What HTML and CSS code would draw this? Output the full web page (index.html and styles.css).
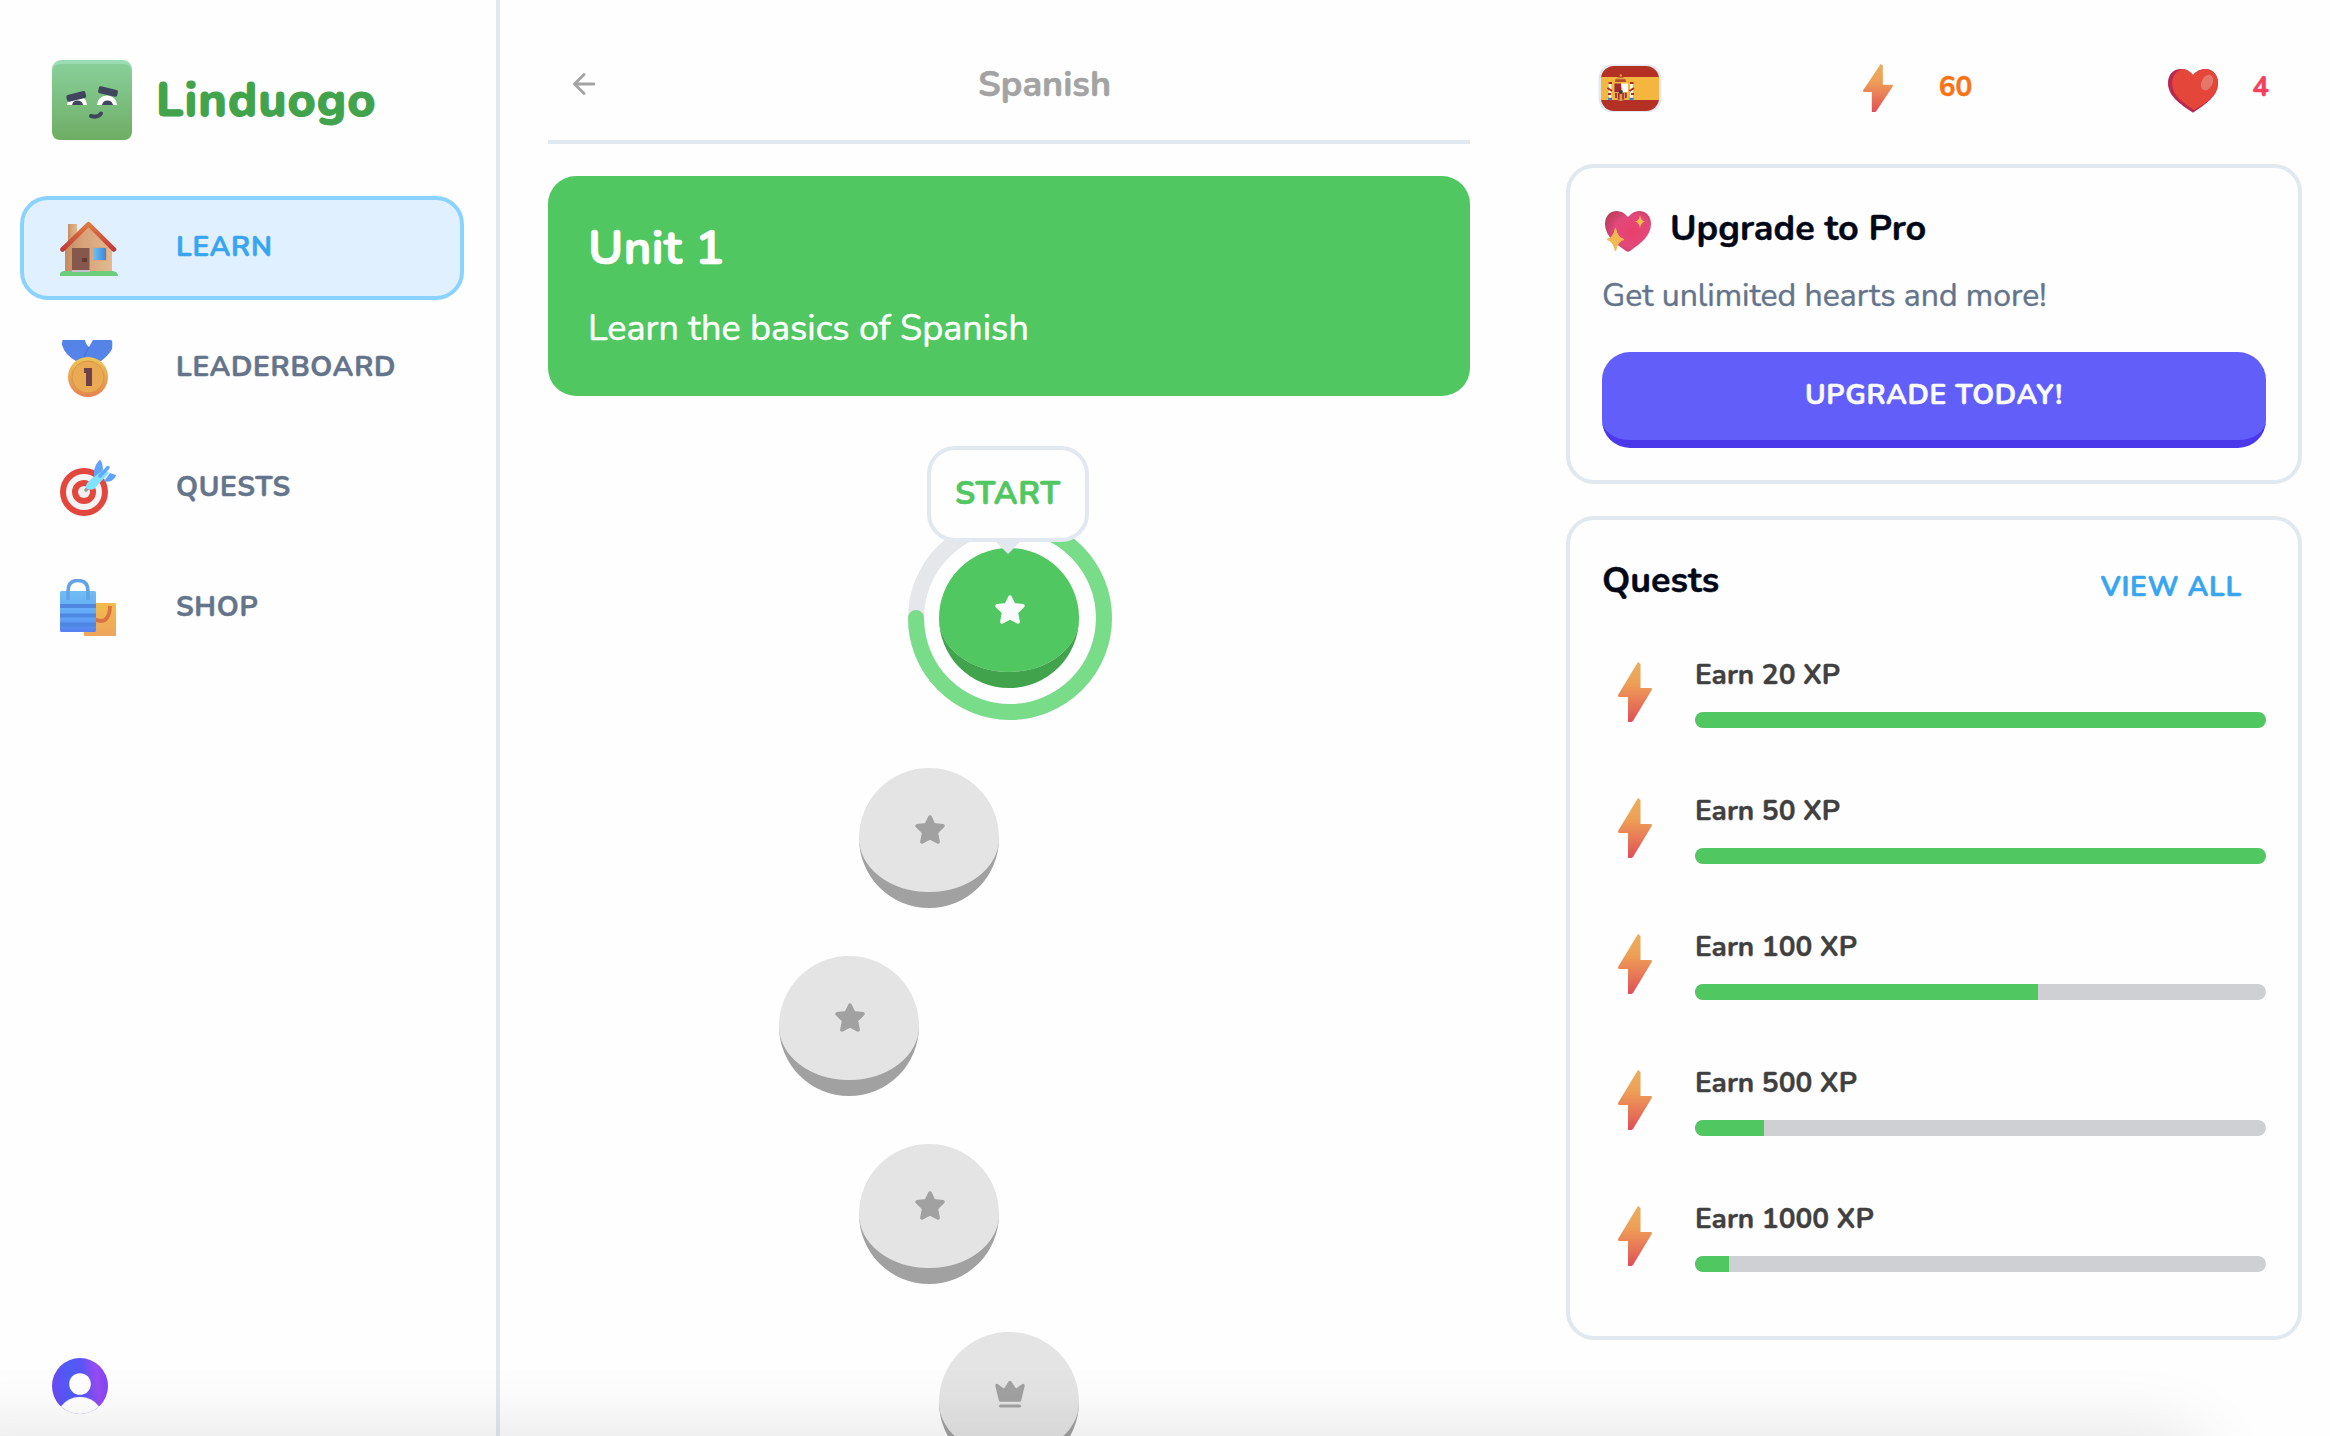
FILE: index.html
```html
<!DOCTYPE html>
<html lang="en">
<head>
<meta charset="utf-8">
<title>Linduogo</title>
<link rel="stylesheet" href="styles.css">
</head>
<body>
<svg class="defs" width="0" height="0" aria-hidden="true">
  <defs>
    <linearGradient id="boltFill" x1="0" y1="0" x2="0" y2="1"><stop offset="0" stop-color="#e8ae5d"/><stop offset=".35" stop-color="#eea057"/><stop offset=".6" stop-color="#ea8257"/><stop offset="1" stop-color="#df5058"/></linearGradient>
    <linearGradient id="logoFill" x1="0" y1="0" x2="0" y2="1"><stop offset="0" stop-color="#88cf9a"/><stop offset="1" stop-color="#6fad64"/></linearGradient>
    <linearGradient id="wall" x1="0" y1="0" x2="1" y2="0"><stop offset="0" stop-color="#c58d5e"/><stop offset=".4" stop-color="#d8a37a"/><stop offset="1" stop-color="#e2b98d"/></linearGradient>
    <linearGradient id="roof" x1="0" y1="0" x2="0" y2="1"><stop offset="0" stop-color="#e07a42"/><stop offset="1" stop-color="#c23a38"/></linearGradient>
    <linearGradient id="pane" x1="0" y1="0" x2="1" y2="0"><stop offset="0" stop-color="#6cc3f4"/><stop offset="1" stop-color="#4286d6"/></linearGradient>
    <linearGradient id="medalRim" x1="0" y1="0" x2="0" y2="1"><stop offset="0" stop-color="#eec653"/><stop offset="1" stop-color="#e68450"/></linearGradient>
    <linearGradient id="bagBlue" x1="0" y1="0" x2="0" y2="1"><stop offset="0" stop-color="#70bdf2"/><stop offset=".6" stop-color="#62a8f8"/><stop offset="1" stop-color="#5580ee"/></linearGradient>
    <linearGradient id="bagGold" x1="0" y1="0" x2="0" y2="1"><stop offset="0" stop-color="#f3bb4c"/><stop offset="1" stop-color="#eea55c"/></linearGradient>
    <radialGradient id="pinkHeart" cx=".6" cy=".5" r=".7"><stop offset="0" stop-color="#e8406a"/><stop offset=".55" stop-color="#e3497c"/><stop offset="1" stop-color="#b53a55"/></radialGradient>
    <linearGradient id="avatarFill" x1="0" y1=".4" x2="1" y2=".3"><stop offset="0" stop-color="#6a4af4"/><stop offset=".3" stop-color="#4f5cf6"/><stop offset=".55" stop-color="#5a55f6"/><stop offset=".8" stop-color="#984bf2"/><stop offset="1" stop-color="#7a46f4"/></linearGradient>
    <symbol id="bolt" viewBox="0 0 34 60"><path d="M20 0 22.500 2V26H33.500L34 27.500 15 59 14 60H10V35H.5L0 33Z" fill="url(#boltFill)"/></symbol>
    <symbol id="star" viewBox="0 0 30 29"><path d="M15 2.200 18.700 9.900 27.800 11 21.200 17.300 23 26.800 15 22.500 7 26.800 8.800 17.300 2.200 11 11.300 9.900Z" fill="currentColor" stroke="currentColor" stroke-width="3.800" stroke-linejoin="round"/></symbol>
    <symbol id="crown" viewBox="0 0 30 28"><path d="M2 5 9.500 10.500 15 2 20.500 10.500 28 5 24.500 19.500H5.500Z" fill="currentColor" stroke="currentColor" stroke-width="3.400" stroke-linejoin="round"/><path d="M5.500 25.500H24.500" stroke="currentColor" stroke-width="3" stroke-linecap="round"/></symbol>
  </defs>
</svg>

<div class="app">
  <aside class="sidebar">
    <div class="brand">
      <svg class="logo" viewBox="0 0 80 80">
        <rect width="80" height="80" rx="9" fill="#9addb2"/>
        <path d="M0 13Q0 4 9 4H71Q80 4 80 13V71Q80 80 71 80H9Q0 80 0 71Z" fill="url(#logoFill)"/>
        <path d="M15 45A10 9.500 0 0 1 35 45ZM45 45A10 9.500 0 0 1 65 45Z" fill="#fff"/>
        <path d="M20 45A5.700 6 0 0 1 31 45ZM50 45A5.700 6 0 0 1 61 45Z" fill="#3e455d"/>
        <g fill="#3e455d"><rect x="14.500" y="33" width="19.500" height="7" rx="1.800" transform="rotate(-14 24 36.500)"/><rect x="46.300" y="28" width="19.500" height="7" rx="1.800" transform="rotate(13 56 31.500)"/></g>
        <path d="M39 56Q46 58 49 53.500" fill="none" stroke="#3e455d" stroke-width="4" stroke-linecap="round"/>
      </svg>
      <span class="brand-name">Linduogo</span>
    </div>
    <nav class="nav">
      <a class="nav-item active">
        <svg class="nav-icon" viewBox="0 0 60 60">
          <rect x="8" y="5" width="9" height="20" fill="url(#wall)"/>
          <path d="M5 30 28.500 6 52 30V53H5Z" fill="url(#wall)"/>
          <path d="M2.500 30.500 28.500 5.200 54 30.500" fill="none" stroke="url(#roof)" stroke-width="4.600" stroke-linejoin="round" stroke-linecap="round"/>
          <rect x="12" y="29" width="17.500" height="23" fill="#85574d"/><rect x="22" y="39" width="5" height="4" fill="#633b34"/>
          <rect x="31" y="28" width="16" height="14" fill="#d9a481"/><rect x="33" y="29" width="13" height="12" fill="url(#pane)"/>
          <path d="M0 57V54Q2 51.500 5 52H53Q58 53 58 57Z" fill="#6cce7a"/><rect x="12" y="51" width="18" height="2" fill="#c3c0cc"/>
        </svg>
        <span class="nav-label">LEARN</span>
      </a>
      <a class="nav-item">
        <svg class="nav-icon low" viewBox="0 0 60 60">
          <path d="M3 0H25Q26 5 29 7L33 0H51Q53 0 52 9Q49 15 41 21H16Q5 15 2 5Q2 0 3 0Z" fill="#5583e8"/><path d="M29 7 24 17" stroke="#426fd0" stroke-width="1"/>
          <circle cx="28" cy="37" r="20" fill="url(#medalRim)"/><circle cx="28" cy="37" r="16" fill="#eaaa53" stroke="#d9964a" stroke-width="1"/>
          <path d="M24 28H32V46H26V33H24Z" fill="#70404a"/>
        </svg>
        <span class="nav-label">LEADERBOARD</span>
      </a>
      <a class="nav-item">
        <svg class="nav-icon low" viewBox="0 0 60 60">
          <circle cx="24" cy="32" r="24" fill="#e3463d"/><circle cx="24" cy="32" r="18" fill="#f4f4f4"/><circle cx="24" cy="32" r="12" fill="#e3463d"/><circle cx="24" cy="32" r="6" fill="#eee"/>
          <path d="M26 30 30 26" stroke="#999" stroke-width="3.500" stroke-linecap="round"/>
          <path d="M34 16Q33 7 39.500 0Q42 0 43 9L40 20Z M44 21 50 13 56 15Q56 18 51 21Q46 23 41 20Z" fill="#61a3f8"/>
          <path d="M45 9 31 19Q25 24 26 28Q29 31 34 29L49 13Z" fill="#80e2fb"/>
          <path d="M48 7.500 40 16" stroke="#62a7f7" stroke-width="3.500" stroke-linecap="round"/>
        </svg>
        <span class="nav-label">QUESTS</span>
      </a>
      <a class="nav-item">
        <svg class="nav-icon" viewBox="0 0 60 60">
          <path d="M24 24H55Q56 24 56 25V57H24Z" fill="url(#bagGold)"/><path d="M32 38Q38 44 45 41Q50 37 50 27" fill="none" stroke="#d97342" stroke-width="3.800"/>
          <rect x="0" y="12" width="36" height="41" rx="1.500" fill="url(#bagBlue)"/>
          <path d="M0 27H36M0 36.500H36M0 45.500H36" stroke="#4e87df" stroke-width="4"/>
          <path d="M8 21V12Q8 1.500 18 1.500T28 12V21" fill="none" stroke="#62a3e8" stroke-width="3.500"/>
        </svg>
        <span class="nav-label">SHOP</span>
      </a>
    </nav>
    <svg class="avatar" viewBox="0 0 56 56">
      <circle cx="28" cy="28" r="28" fill="url(#avatarFill)"/><circle cx="28" cy="26" r="10.800" fill="#fff"/>
      <path d="M9 48.500Q16 39 28 39T47 48.500Q39 56 28 56T9 48.500Z" fill="#fff" stroke="#ddd" stroke-width=".3"/>
    </svg>
  </aside>

  <main class="feed">
    <header class="feed-header">
      <svg class="back" viewBox="0 0 22 22"><path d="M21 11H1.500M11 1.500 1.500 11 11 20.500" fill="none" stroke="#a3a3a3" stroke-width="2.800" stroke-linecap="round" stroke-linejoin="round"/></svg>
      <h1 class="course">Spanish</h1>
    </header>
    <section class="unit">
      <h2 class="unit-title">Unit 1</h2>
      <p class="unit-text">Learn the basics of Spanish</p>
    </section>
    <div class="path">
      <div class="current">
        <svg class="ring" viewBox="0 0 204 204"><circle cx="102" cy="102" r="94" fill="none" stroke="#e5e7eb" stroke-width="16"/><path d="M102 8A94 94 0 1 1 8 102" fill="none" stroke="#78dc89" stroke-width="16" stroke-linecap="round"/></svg>
        <button class="lesson done"><svg class="glyph"><use href="#star"/></svg></button>
        <div class="bubble"><span class="bubble-text">START</span></div>
      </div>
      <button class="lesson step-1"><svg class="glyph"><use href="#star"/></svg></button>
      <button class="lesson step-2"><svg class="glyph"><use href="#star"/></svg></button>
      <button class="lesson step-1"><svg class="glyph"><use href="#star"/></svg></button>
      <button class="lesson"><svg class="glyph crown"><use href="#crown"/></svg></button>
    </div>
  </main>

  <aside class="rail">
    <div class="stats">
      <svg class="flag" viewBox="0 0 64 48">
        <defs><clipPath id="flagClip"><rect x="3" y="2" width="58" height="45" rx="13"/></clipPath></defs>
        <rect x=".5" y=".5" width="63" height="48" rx="14" fill="#e2e8f0"/>
        <g clip-path="url(#flagClip)"><rect width="64" height="48" fill="#b42f24"/><rect y="13" width="64" height="23" fill="#f4b63f"/>
          <path d="M17 18Q17 13 22.500 13T28 18Z" fill="#b2502d"/><path d="M18 14.500H27" stroke="#e2a43b" stroke-width="1.500"/><circle cx="22.800" cy="11.500" r="1.200" fill="#d9963a"/>
          <path d="M12 18V35M33.500 18V35" stroke="#fff" stroke-width="2.600"/><path d="M9.500 24 14 27M31.500 27 36 24M10.500 19H14M32 19H35.500M10 30H13M33 30H36" stroke="#a82d2b" stroke-width="2"/><path d="M10 35H14M31.500 35H35.500" stroke="#437abf" stroke-width="2.400"/>
          <path d="M16.500 20H29V31Q29 36 22.800 37Q16.500 36 16.500 31Z" fill="#d9a25a"/><path d="M16.500 19.500H23V28H16.500Z" fill="#9d2b31"/><path d="M23 19.500H30V28H25Z" fill="#fff"/><path d="M18 29V34M20.800 29V35.500M25 29V35.500M27.800 29V34" stroke="#a82d2b" stroke-width="1.700"/><circle cx="22.800" cy="28" r="1.900" fill="#42344f"/>
        </g>
      </svg>
      <div class="stat points"><svg class="stat-bolt" viewBox="0 0 34 60" preserveAspectRatio="none"><use href="#bolt"/></svg><span>60</span></div>
      <div class="stat hearts">
        <svg class="stat-heart" viewBox="0 0 50 44"><path d="M25 6Q20 0 13 0C5 0 0 6 0 14C0 27 12 35 24 43Q25 44 26 43C38 35 50 27 50 14C50 6 45 0 37 0Q30 0 25 6Z" fill="#b8284f"/><path d="M25 6Q21 1 16 0C8 1 4 7 4 15C5 27 15 34 26 41C38 34 50 27 50 14C50 6 45 0 37 0Q29 1 25 6Z" fill="#e44639"/><ellipse cx="39" cy="13.500" rx="5.500" ry="8.300" transform="rotate(27 39 13.500)" fill="#e5776a"/></svg>
        <span>4</span>
      </div>
    </div>
    <section class="card promo">
      <div class="promo-head">
        <svg class="promo-heart" viewBox="0 0 46 42"><path d="M23 6Q18 0 12 0C4 0 0 6 0 13C0 25 11 33 21 40Q23 41.500 25 40C35 33 46 25 46 13C46 6 42 0 34 0Q28 0 23 6Z" fill="url(#pinkHeart)"/><path d="M10.500 17Q12.500 27 19 28.500Q12.500 30 10.500 40Q8.500 30 2 28.500Q8.500 27 10.500 17Z" fill="#f1b950" stroke="#f1b950" stroke-width="1"/><path d="M35 4Q36 10 40 10.500Q36 11.500 35 17Q34 11.500 30 10.500Q34 10 35 4Z" fill="#f1b950"/></svg>
        <h2 class="card-title promo-title">Upgrade to Pro</h2>
      </div>
      <p class="promo-text">Get unlimited hearts and more!</p>
      <button class="upgrade">UPGRADE TODAY!</button>
    </section>
    <section class="card quests">
      <div class="quests-head"><h2 class="card-title quests-title">Quests</h2><a class="view-all">VIEW ALL</a></div>
      <ul class="quest-list">
        <li class="quest"><svg class="quest-bolt"><use href="#bolt"/></svg><div class="quest-body"><span class="quest-name">Earn 20 XP</span><div class="bar"><div class="fill" style="width:100%"></div></div></div></li>
        <li class="quest"><svg class="quest-bolt"><use href="#bolt"/></svg><div class="quest-body"><span class="quest-name">Earn 50 XP</span><div class="bar"><div class="fill" style="width:100%"></div></div></div></li>
        <li class="quest"><svg class="quest-bolt"><use href="#bolt"/></svg><div class="quest-body"><span class="quest-name">Earn 100 XP</span><div class="bar"><div class="fill" style="width:60%"></div></div></div></li>
        <li class="quest"><svg class="quest-bolt"><use href="#bolt"/></svg><div class="quest-body"><span class="quest-name">Earn 500 XP</span><div class="bar"><div class="fill" style="width:12%"></div></div></div></li>
        <li class="quest"><svg class="quest-bolt"><use href="#bolt"/></svg><div class="quest-body"><span class="quest-name">Earn 1000 XP</span><div class="bar"><div class="fill" style="width:6%"></div></div></div></li>
      </ul>
    </section>
  </aside>
</div>
<div class="bottom-shade"></div>
</body>
</html>
```
FILE: styles.css
```css
* { box-sizing: border-box; margin: 0; padding: 0; }
html, body { height: 100%; overflow: hidden; }
body { background: #fefefe; color: #020817; font-family: Nunito, Lato, sans-serif; font-weight: 700; font-size: 28px; line-height: 40px; }
button { border: 0; font: inherit; }
svg { display: block; flex: none; }
.defs { position: absolute; }
.app { display: flex; height: 1436px; overflow: hidden; }

.sidebar { width: 500px; flex: none; border-right: 4px solid #e2e8f0; padding: 60px 32px 22px 20px; display: flex; flex-direction: column; }
.brand { display: flex; align-items: center; gap: 24px; padding-left: 32px; height: 80px; margin-bottom: 56px; }
.logo { width: 80px; height: 80px; }
.brand-name { font-size: 48px; line-height: 64px; font-weight: 800; color: #41a34b; letter-spacing: 1px; -webkit-text-stroke: .9px currentColor; }
.nav { display: flex; flex-direction: column; gap: 16px; }
.nav-item { height: 104px; border: 4px solid transparent; border-radius: 28px; display: flex; align-items: center; gap: 56px; padding-left: 36px; color: #64748b; }
.nav-item.active { background: #e0f0fe; border-color: #8bd3ff; color: #38a5f0; }
.nav-icon { width: 60px; height: 60px; margin-top: 2px; }
.nav-icon.low { margin-top: 4px; }
.nav-label { letter-spacing: .7px; margin-top: -3px; -webkit-text-stroke: .5px currentColor; }
.avatar { width: 56px; height: 56px; margin: auto 0 0 32px; }

.feed { width: 922px; margin-left: 48px; flex: none; }
.feed-header { height: 144px; border-bottom: 4px solid #e2e8f0; display: flex; align-items: center; padding: 28px 359px 0 25px; justify-content: space-between; }
.back { width: 22px; height: 22px; }
.course { font-size: 36px; color: #a3a3a3; padding-top: 1px; -webkit-text-stroke: .5px currentColor; }
.unit { margin-top: 32px; height: 220px; border-radius: 28px; background: #50c760; color: #fff; padding: 40px 40px 0; display: flex; flex-direction: column; gap: 21px; }
.unit-title { font-size: 48px; line-height: 64px; -webkit-text-stroke: .5px currentColor; }
.unit-text { font-size: 36px; line-height: 56px; font-weight: 400; -webkit-text-stroke: .5px currentColor; }
.path { display: flex; flex-direction: column; align-items: center; gap: 48px; padding-top: 120px; }
.current { width: 204px; height: 204px; position: relative; display: grid; place-items: center; padding-right: 2px; margin-left: 2px; }
.ring { position: absolute; inset: 0; width: 204px; height: 204px; }
.lesson { width: 140px; height: 140px; flex: none; border-radius: 50%; border-bottom: 16px solid #a1a1a1; background: #e4e4e4; background-clip: padding-box; color: #a1a1a1; display: grid; place-items: center; position: relative; }
.lesson.done { background-color: #50c760; border-color: #41a34b; color: #f8fafc; }
.lesson.step-1 { margin-right: 160px; }
.lesson.step-2 { margin-right: 320px; }
.glyph { width: 30px; height: 29px; margin: 0 0 2px 2px; }
.glyph.crown { margin-bottom: 0; }
.bubble { position: absolute; left: 19px; top: -70px; width: 162px; height: 96px; border: 4px solid #e2e8f0; border-radius: 28px; background: #fefefe; display: grid; place-items: center; }
.bubble::after { content: ""; position: absolute; left: 64px; top: 91px; border: 13px solid transparent; border-top-color: #e2e8f0; border-bottom: 0; }
.bubble-text { font-size: 32px; color: #50c760; letter-spacing: .8px; -webkit-text-stroke: .6px currentColor; }

.rail { width: 736px; margin-left: 96px; flex: none; }
.stats { height: 164px; padding: 64px 33px 0 32px; display: flex; align-items: flex-start; justify-content: space-between; }
.flag { width: 64px; height: 48px; }
.stat { display: flex; align-items: center; height: 48px; }
.stat span { margin-top: -2px; -webkit-text-stroke: .5px currentColor; }
.points { color: #f97316; gap: 46px; margin-left: 5px; }
.hearts { color: #f43f5e; gap: 34px; }
.stat-bolt { width: 30px; height: 48px; }
.stat-heart { width: 50px; height: 44px; margin-top: 5px; }
.card { border: 4px solid #e2e8f0; border-radius: 28px; padding: 32px; }
.promo { height: 320px; margin-bottom: 32px; }
.promo-head { display: flex; align-items: center; gap: 19px; padding: 2px 0 0 3px; height: 56px; }
.promo-heart { width: 46px; height: 42px; margin-top: 5px; }
.card-title { font-size: 36px; line-height: 56px; -webkit-text-stroke: .4px currentColor; }
.promo-text { font-size: 32px; line-height: 48px; font-weight: 400; color: #64748b; margin-top: 16px; -webkit-text-stroke: .4px currentColor; }
.upgrade { width: 664px; height: 96px; margin-top: 32px; padding-bottom: 3px; border-radius: 28px; border-bottom: 8px solid #4a38ea; background: #615efa; color: #f8fafc; letter-spacing: .7px; -webkit-text-stroke: .5px currentColor; }
.quests { height: 824px; }
.quests-head { display: flex; justify-content: space-between; height: 102px; padding-right: 24px; }
.quests-title { padding-top: 1px; }
.view-all { color: #38a5f0; padding-top: 15px; letter-spacing: .7px; -webkit-text-stroke: .5px currentColor; }
.quest-list { list-style: none; }
.quest { height: 136px; display: flex; padding-left: 16px; gap: 43px; }
.quest-bolt { width: 34px; height: 60px; margin-top: 8px; }
.quest-body { flex: 1; display: flex; flex-direction: column; gap: 17px; padding-top: 1px; }
.quest-name { color: #404040; -webkit-text-stroke: .4px currentColor; }
.bar { height: 16px; border-radius: 8px; overflow: hidden; background: #cfd0d4; }
.fill { height: 100%; background: #50c760; }
.bottom-shade { position: absolute; left: -60px; right: 125px; bottom: -60px; height: 60px; border-radius: 0 40px 0 0; box-shadow: 0 0 72px rgba(0,0,0,.125); pointer-events: none; }
```
